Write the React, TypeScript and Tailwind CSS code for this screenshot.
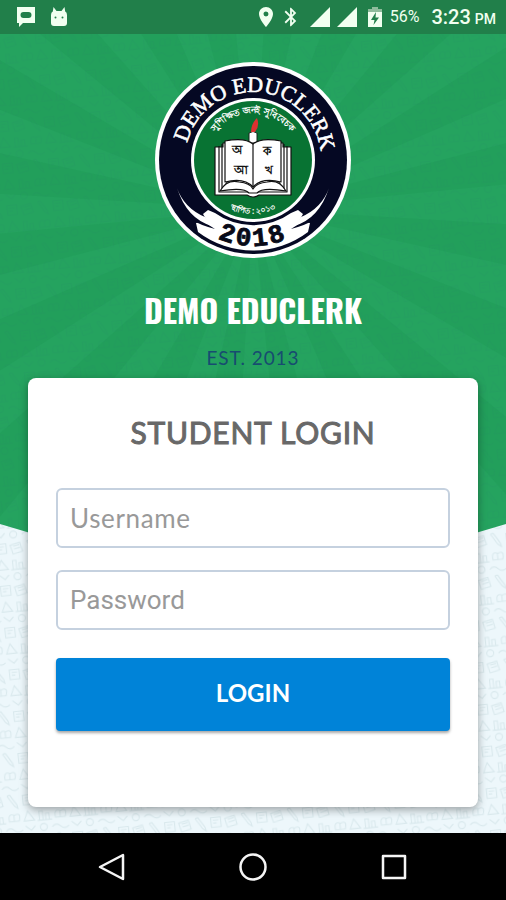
import { useState } from "react";
import { MdBluetooth, MdLocationOn } from "react-icons/md";

const RAY_COUNT = 20;

function rayPath(index: number) {
  const step = (Math.PI * 2) / RAY_COUNT;
  const from = index * step + 0.06;
  const to = from + step * 0.5;
  const point = (angle: number) => `${253 + Math.cos(angle) * 700} ${175 + Math.sin(angle) * 700}`;
  return `M253 175L${point(from)}L${point(to)}Z`;
}

function StatusBar() {
  return (
    <header className="flex h-[34px] shrink-0 items-center justify-between bg-[#217f4a] pr-[10px] pl-4 font-['Roboto',sans-serif] text-[#f1fff0]">
      <div className="flex items-center gap-[14px]">
        <svg className="h-5 w-5" viewBox="0 0 20 20" fill="currentColor" aria-hidden="true">
          <path fillRule="evenodd" d="M1 0H19V16H7L3 20V16H1ZM7.5 5A3 3 0 0 0 7.5 11H12.5A3 3 0 0 0 12.5 5Z" />
        </svg>
        <svg className="h-5 w-[18px]" viewBox="0 0 18 20" fill="currentColor" aria-hidden="true">
          <path d="M3.5 0L6.5 4H11.5L14.5 0L15.2 4.6Q17 5.5 17 8V16Q17 19 14 19H4Q1 19 1 16V8Q1 5.5 2.8 4.6Z" />
          <circle cx="5.5" cy="10.5" r="1" fill="#217f4a" />
          <circle cx="12.5" cy="10.5" r="1" fill="#217f4a" />
        </svg>
      </div>
      <div className="flex items-center">
        <MdLocationOn className="size-6" aria-hidden="true" />
        <MdBluetooth className="ml-0.5 size-[22px]" aria-hidden="true" />
        <svg className="ml-2 h-5 w-12" viewBox="0 0 48 20" fill="currentColor" aria-hidden="true">
          <path d="M0 20L20 0V20ZM27 20L47 0V20Z" />
        </svg>
        <svg className="ml-[10px] h-5 w-[14px]" viewBox="0 0 14 20" aria-hidden="true">
          <path d="M4 0H10V2H14V6H0V2H4Z" fill="#8fbc9c" />
          <path d="M0 5H14V20H0Z" fill="currentColor" />
          <path d="M8 5L3 13H6.5L5.5 18L11 10.5H7.5Z" fill="#217f4a" />
        </svg>
        <span className="ml-2 text-base">56%</span>
        <span className="ml-3 text-xl font-medium">3:23</span>
        <span className="ml-1 pt-1 text-sm font-medium">PM</span>
      </div>
    </header>
  );
}

function Backdrop() {
  return (
    <svg
      className="absolute inset-0 h-full w-full"
      viewBox="0 0 506 799"
      preserveAspectRatio="xMidYMin slice"
      aria-hidden="true"
    >
      <defs>
        <pattern id="doodles" width="66" height="60" patternUnits="userSpaceOnUse" patternTransform="scale(0.7) rotate(-6)">
          <g fill="none" strokeWidth="1.6" stroke="#2b6a70">
            <path d="M4 8L18 5L21 18L7 21ZM8 10L17 8M9 14L18 12M28 4L37 19M32 3L41 18M28 4L32 3M37 19L42 23L41 18" />
            <path d="M50 5H64V19H50ZM53 9H61M53 13H58M5 42V30H10V42M14 42V34H19V42M2 43H23" />
            <path d="M28 41Q26 28 36 32Q46 28 42 41ZM35 32V41M55 28L64 42H49Z" />
            <circle cx="10" cy="53" r="5" />
            <path d="M22 54Q28 48 34 54T46 54M50 49L58 56L64 50" />
          </g>
        </pattern>
        <clipPath id="hero">
          <path d="M0 0H506V490Q253 570 0 490Z" />
        </clipPath>
      </defs>
      <rect width="506" height="799" fill="#edf7fb" />
      <rect width="506" height="799" fill="url(#doodles)" opacity="0.1" />
      <g clipPath="url(#hero)">
        <rect width="506" height="560" fill="#25a35f" />
        {Array.from({ length: RAY_COUNT }, (_, i) => (
          <path key={i} d={rayPath(i)} fill="#1f9b58" opacity="0.5" />
        ))}
        <rect width="506" height="560" fill="url(#doodles)" opacity="0.07" />
      </g>
    </svg>
  );
}

function SchoolSeal() {
  return (
    <svg className="size-[196px]" viewBox="0 0 196 196" role="img" aria-label="Demo Educlerk seal">
      <defs>
        <path id="name-arc" d="M30 98A68 68 0 0 1 166 98" />
        <path id="motto-arc" d="M51 98A47 47 0 0 1 145 98" />
        <path id="founded-arc" d="M44 98A54 54 0 0 0 152 98" />
        <path id="year-arc" d="M12 98A86 86 0 0 0 184 98" />
      </defs>
      <circle cx="98" cy="98" r="98" fill="#fff" />
      <circle cx="98" cy="98" r="94" fill="#050823" />
      <circle cx="98" cy="98" r="62" fill="#fff" />
      <circle cx="98" cy="98" r="59" fill="#087333" />

      <text fill="#fff" textAnchor="middle" className="font-['Liberation_Serif',serif] text-[22px]" stroke="#fff" strokeWidth="0.6">
        <textPath href="#name-arc" startOffset="52%">DEMO EDUCLERK</textPath>
      </text>
      <text fill="#fff" textAnchor="middle" className="font-sans text-[9px] font-bold">
        <textPath href="#motto-arc" startOffset="50%">সুশিক্ষিত জনই সুবিবেচক</textPath>
      </text>
      <text fill="#fff" textAnchor="middle" className="font-sans text-[8px] font-bold">
        <textPath href="#founded-arc" startOffset="50%">স্থাপিত : ২০১৩</textPath>
      </text>

      {/* Candle */}
      <path d="M94 71Q98 68 102 71V83H94Z" fill="#fff" stroke="#17251c" />
      <path d="M96 70Q96 62 102 56Q105 64 100 70Z" fill="#df3131" />

      {/* Book */}
      <g fill="#fff" stroke="#111" strokeWidth="1.2" strokeLinejoin="round">
        <path d="M60 85H68V81H128V85H136V133H104Q98 137 92 133H60Z" />
        <path d="M64 84V130H132V84M67 82V127L73 119M129 82V127L123 119" fill="none" />
        <path d="M98 82Q90 75 70 79V120Q89 115 98 125Q107 115 126 120V79Q106 75 98 82Z" />
        <path d="M98 82V125" fill="none" />
        <path d="M65 129Q72 117 84 120Q95 121 98 127Q101 121 112 120Q124 117 131 129Q107 125 102 131H94Q89 125 65 129Z" />
      </g>
      <g fill="#111" className="font-sans text-xs font-bold" textAnchor="middle">
        <text x="82" y="92">অ</text>
        <text x="112" y="93">ক</text>
        <text x="86" y="112">আ</text>
        <text x="114" y="112">খ</text>
      </g>

      {/* Ribbon */}
      <path d="M53 148L60 151A65 65 0 0 0 136 151L143 148L148 152L144 159L155 161L153 170A91 91 0 0 1 43 170L41 161L52 159L48 152Z" fill="#fff" />
      <path d="M22 126Q32 150 60 167Q45 163 37 158Q27 145 22 126ZM174 126Q164 150 136 167Q151 163 159 158Q169 145 174 126Z" fill="#050823" />
      <path d="M22 126Q29 146 50 155L57 164Q32 157 22 126ZM174 126Q167 146 146 155L139 164Q164 157 174 126Z" fill="#fff" />
      <text fill="#080a18" textAnchor="middle" className="font-['Liberation_Mono',monospace] text-[26px] font-bold tracking-widest" stroke="#080a18" strokeWidth="0.8">
        <textPath href="#year-arc" startOffset="50%">2018</textPath>
      </text>
    </svg>
  );
}

function LoginCard() {
  const [username, setUsername] = useState("");
  const [password, setPassword] = useState("");

  return (
    <form
      onSubmit={(e) => e.preventDefault()}
      className="mt-2 w-full rounded-lg bg-white px-7 pt-9 pb-[76px] shadow-[0_3px_8px_rgba(0,0,0,0.35)]"
    >
      <h2 className="text-center text-[30px] leading-9 tracking-wide text-[#686868] [-webkit-text-stroke:1px_#686868]">
        STUDENT LOGIN
      </h2>
      <div className="mt-[38px] flex flex-col gap-[22px]">
        <input
          type="text"
          aria-label="Username"
          placeholder="Username"
          value={username}
          onChange={(e) => setUsername(e.target.value)}
          className="h-[60px] w-full rounded-md border-2 border-[#c5d1df] bg-white px-3 text-[26px] tracking-wide text-gray-700 placeholder:text-[#999]"
        />
        <input
          type="password"
          aria-label="Password"
          placeholder="Password"
          value={password}
          onChange={(e) => setPassword(e.target.value)}
          className="h-[60px] w-full rounded-md border-2 border-[#c5d1df] bg-white px-3 font-['Roboto',sans-serif] text-[26px] text-gray-700 placeholder:text-[#999]"
        />
      </div>
      <button
        type="submit"
        className="mt-7 h-[73px] w-full rounded bg-[#0083d8] pb-1 text-2xl font-bold text-white shadow-[0_2px_3px_rgba(0,0,0,0.35)]"
      >
        LOGIN
      </button>
    </form>
  );
}

function NavigationBar() {
  return (
    <nav aria-label="System" className="flex h-[67px] shrink-0 items-center justify-center gap-[113px] bg-black text-[#f5f5f5]">
      <button type="button" aria-label="Back">
        <svg className="size-7" viewBox="0 0 28 28" fill="none" stroke="currentColor" strokeWidth="2.5" strokeLinejoin="round">
          <path d="M25 2V26L2 14Z" />
        </svg>
      </button>
      <button type="button" aria-label="Home">
        <svg className="size-7" viewBox="0 0 28 28" fill="none" stroke="currentColor" strokeWidth="2.5">
          <circle cx="14" cy="14" r="12.5" />
        </svg>
      </button>
      <button type="button" aria-label="Recent apps">
        <svg className="size-7" viewBox="0 0 28 28" fill="none" stroke="currentColor" strokeWidth="2.5" strokeLinejoin="round">
          <path d="M3 3H25V25H3Z" />
        </svg>
      </button>
    </nav>
  );
}

export default function App() {
  return (
    <div className="flex min-h-screen flex-col font-['Lato',sans-serif]">
      <StatusBar />
      <main className="relative flex-1 overflow-hidden">
        <Backdrop />
        <div className="relative flex flex-col items-center px-7 pt-7 pb-[26px]">
          <SchoolSeal />
          <h1 className="mt-8 font-['Oswald','Liberation_Sans_Narrow',sans-serif] text-[32px] leading-10 font-bold text-white">
            DEMO EDUCLERK
          </h1>
          <p className="mt-4 text-[19px] leading-6 tracking-wider text-[#174c70]">EST. 2013</p>
          <LoginCard />
        </div>
      </main>
      <NavigationBar />
    </div>
  );
}
